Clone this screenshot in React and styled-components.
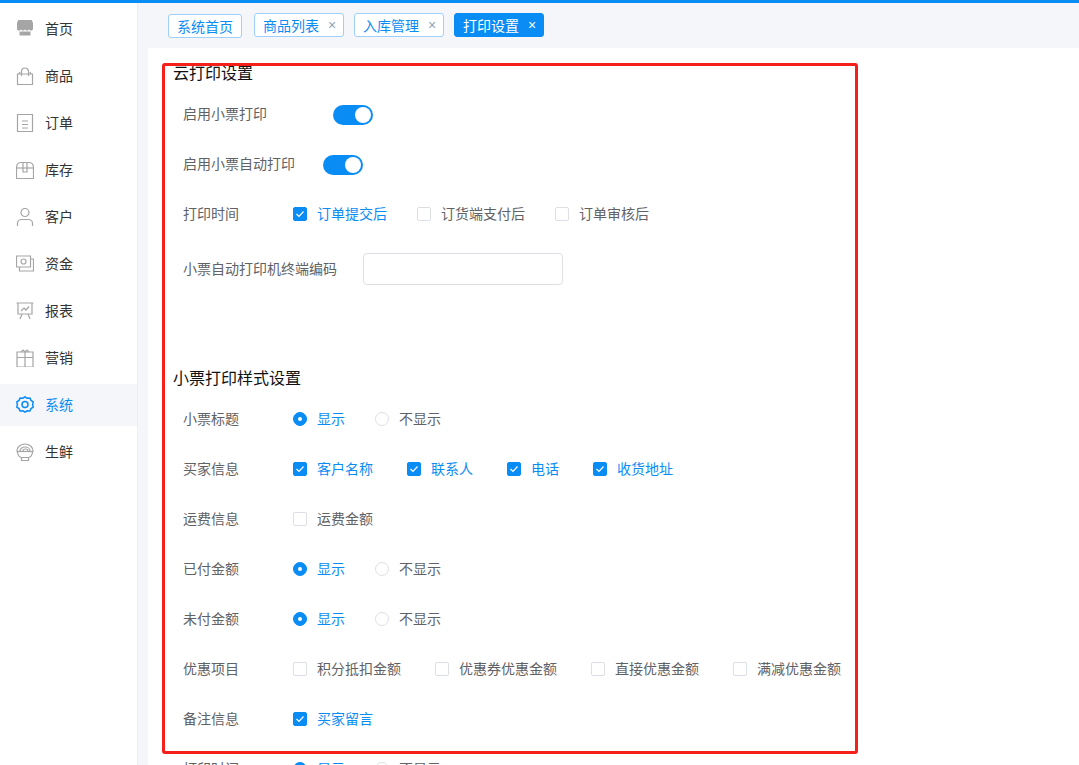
import React from 'react';
import styled, { createGlobalStyle } from 'styled-components';

const Global = createGlobalStyle`
  html, body { margin: 0; padding: 0; height: 100%; overflow: hidden; }
  body { font-family: "Noto Sans CJK SC", "Liberation Sans", sans-serif; background: #f5f6fa; }
`;

const Page = styled.div`
  position: relative;
  width: 1079px;
  height: 765px;
  overflow: hidden;
  display: flex;
  border-top: 3px solid #0a8cf5;
  box-sizing: border-box;
  background: #f5f6fa;
`;
const Sidebar = styled.nav`
  width: 138px;
  flex: none;
  background: #fff;
  padding-top: 5px;
  box-sizing: border-box;
  border-right: 1px solid #eceef2;
  margin-right: 10px;
`;
const NavItem = styled.div`
  height: 42px;
  margin-bottom: 5px;
  display: flex;
  align-items: center;
  padding-left: 16px;
  gap: 11px;
  font-size: 14px;
  color: ${p => (p.$active ? '#0a8cf5' : '#333')};
  background: ${p => (p.$active ? '#f5f6fa' : 'transparent')};
`;
const NavText = styled.span`
  margin-bottom: 2px;
`;
const NavIcon = styled.svg`
  width: 18px;
  height: 18px;
  flex: none;
  fill: none;
  stroke: ${p => (p.$active ? '#0a8cf5' : '#a5a5a5')};
  stroke-width: 1.2;
`;
const Main = styled.main`
  flex: 1;
  display: flex;
  flex-direction: column;
  min-width: 0;
`;
const TabBar = styled.div`
  height: 45px;
  flex: none;
  display: flex;
  align-items: flex-start;
  padding: 10px 0 0 20px;
  box-sizing: border-box;
`;
const Tab = styled.div`
  height: 24px;
  box-sizing: border-box;
  display: flex;
  align-items: center;
  padding: 0 ${p => (p.$home ? 8 : 7)}px 0 8px;
  gap: 9px;
  margin-right: ${p => p.$mr}px;
  margin-top: ${p => (p.$home ? 1 : 0)}px;
  border: 1px solid ${p => (p.$active ? '#0a8cf5' : '#9fd0fa')};
  border-radius: 3px;
  font-size: 14px;
  color: ${p => (p.$active ? '#fff' : '#0a8cf5')};
  background: ${p => (p.$active ? '#0a8cf5' : '#fff')};
`;
const Close = styled.span`
  width: 8px;
  font-size: 14px;
  line-height: 1;
  font-family: "Liberation Sans", sans-serif;
  color: ${p => (p.$active ? '#fff' : '#8fa3bb')};
`;
const Content = styled.div`
  flex: 1;
  background: #fff;
  padding: 15px 0 0 25px;
  min-height: 0;
`;
const Title = styled.h2`
  margin: 0;
  height: 20px;
  line-height: 18px;
  font-size: 16px;
  font-weight: 400;
  color: #111;
`;
const Row = styled.div`
  height: ${p => p.$h || 50}px;
  display: flex;
  align-items: center;
  padding-left: 10px;
  white-space: nowrap;
`;
const Label = styled.span`
  width: ${p => p.$w || 110}px;
  flex: none;
  font-size: 14px;
  color: #606266;
  margin-bottom: ${p => p.$lift || 2}px;
`;
const Toggle = styled.span`
  width: 40px;
  height: 20px;
  border-radius: 10px;
  background: #0a8cf5;
  display: flex;
  align-items: center;
  justify-content: flex-end;
  padding-right: 2px;
  box-sizing: border-box;
  &::after {
    content: '';
    width: 16px;
    height: 16px;
    border-radius: 50%;
    background: #fff;
  }
`;
const Group = styled.div`
  display: flex;
  align-items: center;
  gap: ${p => p.$gap || 30}px;
`;
const Option = styled.label`
  display: flex;
  align-items: center;
  gap: 10px;
  font-size: 14px;
  color: ${p => (p.$on ? '#0a8cf5' : '#606266')};
`;
const OptionText = styled.span`
  margin-bottom: 2px;
`;
const Box = styled.span`
  width: 14px;
  height: 14px;
  box-sizing: border-box;
  flex: none;
  display: flex;
  align-items: center;
  justify-content: center;
  border-radius: 2px;
  border: 1px solid ${p => (p.$on ? '#0a8cf5' : '#dcdfe6')};
  background: ${p => (p.$on ? '#0a8cf5' : '#fff')};
`;
const Radio = styled.span`
  width: 14px;
  height: 14px;
  box-sizing: border-box;
  flex: none;
  display: flex;
  align-items: center;
  justify-content: center;
  border-radius: 50%;
  border: 1px solid ${p => (p.$on ? '#0a8cf5' : '#dcdfe6')};
  background: ${p => (p.$on ? '#0a8cf5' : '#fff')};
  &::after {
    content: '';
    width: 4px;
    height: 4px;
    border-radius: 50%;
    background: ${p => (p.$on ? '#fff' : 'transparent')};
  }
`;
const TextInput = styled.input`
  width: 200px;
  height: 32px;
  box-sizing: border-box;
  border: 1px solid #dcdfe6;
  border-radius: 4px;
  background: #fff;
  outline: none;
`;
const Spacer = styled.div`
  height: ${p => p.$h}px;
`;
const Annotation = styled.div`
  position: absolute;
  left: 162px;
  top: 60px;
  width: 696px;
  height: 691px;
  box-sizing: border-box;
  border: 3px solid #f5201a;
  border-radius: 3px;
  pointer-events: none;
`;

const icons = {
  home: <><path d="M2.200 0h13.600L17 3v6.500c-1.300 1.500-2.700 1.500-4 0-1.300 1.500-2.700 1.500-4 0-1.300 1.500-2.700 1.500-4 0-1.300 1.500-2.700 1.500-4 0V3z" fill="#a5a5a5" stroke="none" /><path d="M3.500 11.500h11V15.500h-11z" fill="#a5a5a5" stroke="none" /></>,
  goods: <><path d="M1.500 7h15v10.500h-15z" /><path d="M5.500 9V4.500a3.500 3.500 0 0 1 7 0V9" /><path d="M3 7 4 5" /><path d="M15 7l-1-2" /></>,
  order: <><path d="M1.500.5h15v17h-15z" /><path d="M6 7h6M6 10.500h6M6 14h6" /></>,
  stock: <><path d="M.5 7 Q.5 1.500 5 1.500h8Q17.500 1.500 17.500 7v10.500H.5z" /><path d="M.5 7h17" /><path d="M7 1.500v9.500h4V1.500" /></>,
  customer: <><circle cx="9" cy="4.500" r="4" /><path d="M1.500 18v-2.500c0-2.500 2-4 4-4h7c2 0 4 1.500 4 4V18" /></>,
  funds: <><path d="M.5 1h14v11H.5z" /><circle cx="7.500" cy="6.500" r="2.500" /><path d="M14.500 4h3v12H3.500v-4" /></>,
  report: <><path d="M.5 1h17M2 1v11h14V1" /><path d="M5 9l3-3 2 2 3-3.500" /><path d="M6 12l-2 5M12 12l2 5" /></>,
  market: <><path d="M1 3h16v15H1z" /><path d="M1 8.500h16M9 3v15" /><path d="M5 3l2-2 2 2 2-2 2 2" /></>,
  system: <><path d="M9 .8l2.200 1.400 2.700-.2 1.100 2.400 2.200 1.500-.6 2.600.6 2.600-2.200 1.500-1.100 2.400-2.700-.2L9 16.200l-2.200-1.400-2.700.2L3 12.600.8 11.100l.6-2.600-.6-2.600L3 4.400l1.100-2.400 2.700.2z" strokeWidth="1.500" /><circle cx="9" cy="8.500" r="3" strokeWidth="1.500" /></>,
  fresh: <><path d="M1 8a8 7 0 0 1 16 0" /><path d="M.5 8.500h17" /><path d="M4 8a5 4 0 0 1 10 0M7 8a2.500 2 0 0 1 5 0" /><path d="M1.500 9c0 3.500 2.500 5.500 4.500 5.500h6c2 0 4.500-2 4.500-5.500" /><path d="M5.500 15v2.500h7V15" /></>,
};

const nav = [
  ['home', '首页'], ['goods', '商品'], ['order', '订单'], ['stock', '库存'], ['customer', '客户'],
  ['funds', '资金'], ['report', '报表'], ['market', '营销'], ['system', '系统', true], ['fresh', '生鲜'],
];

const Check = () => (
  <svg width="10" height="10" viewBox="0 0 10 10" fill="none" stroke="#fff" strokeWidth="1.200"><path d="M1.500 5l2.500 2.500L8.500 2.500" /></svg>
);
const CheckOpt = ({ on, children }) => (
  <Option $on={on}><Box $on={on}>{on && <Check />}</Box><OptionText>{children}</OptionText></Option>
);
const RadioOpt = ({ on, children }) => (
  <Option $on={on}><Radio $on={on} /><OptionText>{children}</OptionText></Option>
);
const Show = () => (
  <Group><RadioOpt on>显示</RadioOpt><RadioOpt>不显示</RadioOpt></Group>
);

export default function App() {
  return (
    <Page>
      <Global />
      <Sidebar>
        {nav.map(([k, t, a]) => (
          <NavItem key={k} $active={a}>
            <NavIcon viewBox="0 0 18 18" $active={a}>{icons[k]}</NavIcon>
            <NavText>{t}</NavText>
          </NavItem>
        ))}
      </Sidebar>
      <Main>
        <TabBar>
          <Tab $home $mr={12}>系统首页</Tab>
          <Tab $mr={10}>商品列表<Close>×</Close></Tab>
          <Tab $mr={10}>入库管理<Close>×</Close></Tab>
          <Tab $active $mr={0}>打印设置<Close $active>×</Close></Tab>
        </TabBar>
        <Content>
          <Title>云打印设置</Title>
          <Spacer $h={7} />
          <Row><Label $w={150} $lift={4}>启用小票打印</Label><Toggle /></Row>
          <Row><Label $w={140} $lift={4}>启用小票自动打印</Label><Toggle /></Row>
          <Row $h={48}><Label>打印时间</Label>
            <Group><CheckOpt on>订单提交后</CheckOpt><CheckOpt>订货端支付后</CheckOpt><CheckOpt>订单审核后</CheckOpt></Group>
          </Row>
          <Row $h={61}><Label $w={180}>小票自动打印机终端编码</Label><TextInput /></Row>
          <Spacer $h={69} />
          <Title>小票打印样式设置</Title>
          <Spacer $h={6} />
          <Row><Label>小票标题</Label><Show /></Row>
          <Row><Label>买家信息</Label>
            <Group $gap={34}><CheckOpt on>客户名称</CheckOpt><CheckOpt on>联系人</CheckOpt><CheckOpt on>电话</CheckOpt><CheckOpt on>收货地址</CheckOpt></Group>
          </Row>
          <Row><Label>运费信息</Label><CheckOpt>运费金额</CheckOpt></Row>
          <Row><Label>已付金额</Label><Show /></Row>
          <Row><Label>未付金额</Label><Show /></Row>
          <Row><Label>优惠项目</Label>
            <Group $gap={34}><CheckOpt>积分抵扣金额</CheckOpt><CheckOpt>优惠券优惠金额</CheckOpt><CheckOpt>直接优惠金额</CheckOpt><CheckOpt>满减优惠金额</CheckOpt></Group>
          </Row>
          <Row><Label>备注信息</Label><CheckOpt on>买家留言</CheckOpt></Row>
          <Row><Label>打印时间</Label><Show /></Row>
        </Content>
      </Main>
      <Annotation />
    </Page>
  );
}
